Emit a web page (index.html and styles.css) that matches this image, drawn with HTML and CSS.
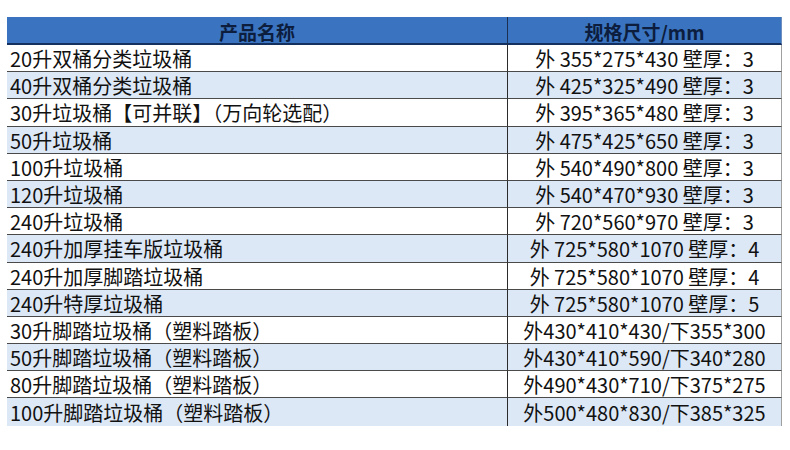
FILE: index.html
```html
<!DOCTYPE html>
<html lang="zh">
<head>
<meta charset="utf-8">
<link rel="stylesheet" href="styles.css">
</head>
<body>
<div class="sheet">
  <div class="cell head name">产品名称</div>
  <div class="cell head size">规格尺寸/mm</div>

  <div class="cell name">20升双桶分类垃圾桶</div><div class="cell size">外 355*275*430 壁厚：3</div>
  <div class="cell name alt">40升双桶分类垃圾桶</div><div class="cell size alt">外 425*325*490 壁厚：3</div>
  <div class="cell name">30升垃圾桶【可并联】（万向轮选配）</div><div class="cell size">外 395*365*480 壁厚：3</div>
  <div class="cell name alt">50升垃圾桶</div><div class="cell size alt">外 475*425*650 壁厚：3</div>
  <div class="cell name">100升垃圾桶</div><div class="cell size">外 540*490*800 壁厚：3</div>
  <div class="cell name alt">120升垃圾桶</div><div class="cell size alt">外 540*470*930 壁厚：3</div>
  <div class="cell name">240升垃圾桶</div><div class="cell size">外 720*560*970 壁厚：3</div>
  <div class="cell name alt">240升加厚挂车版垃圾桶</div><div class="cell size alt">外 725*580*1070 壁厚：4</div>
  <div class="cell name">240升加厚脚踏垃圾桶</div><div class="cell size">外 725*580*1070 壁厚：4</div>
  <div class="cell name alt">240升特厚垃圾桶</div><div class="cell size alt">外 725*580*1070 壁厚：5</div>
  <div class="cell name">30升脚踏垃圾桶（塑料踏板）</div><div class="cell size">外430*410*430/下355*300</div>
  <div class="cell name alt">50升脚踏垃圾桶（塑料踏板）</div><div class="cell size alt">外430*410*590/下340*280</div>
  <div class="cell name">80升脚踏垃圾桶（塑料踏板）</div><div class="cell size">外490*430*710/下375*275</div>
  <div class="cell name alt last">100升脚踏垃圾桶（塑料踏板）</div><div class="cell size alt last">外500*480*830/下385*325</div>
</div>
</body>
</html>
```

FILE: styles.css
```css
html, body {
  margin: 0;
  padding: 0;
  background: #ffffff;
}

.sheet {
  margin: 17px 0 0 7px;
  width: 775px;
  display: grid;
  grid-template-columns: 501px 274px;
  grid-template-rows: 28px;
  grid-auto-rows: 27.2px;
  font-family: "Noto Sans CJK SC", "Noto Sans", sans-serif;
  font-size: 20px;
  color: #111111;
}

.cell {
  box-sizing: border-box;
  display: flex;
  align-items: center;
  white-space: nowrap;
  line-height: 1;
  border-bottom: 1px solid #4a4a4a;
  padding-top: 2px;
}

.cell.name {
  padding-left: 3px;
  border-right: 1px solid #2b2b2b;
}

.cell.size {
  justify-content: center;
  border-right: 1px solid #a0a0a0;
}

.cell.alt {
  background: #dde8f6;
}

.cell.last {
  border-bottom: none;
}

.cell.head {
  background: #3a73bf;
  color: #0c1d3d;
  font-weight: 700;
  font-size: 19px;
  justify-content: center;
  border-bottom: 2px solid #14305e;
  padding-left: 0;
}

.cell.head.name {
  border-right: 1px solid #1d2f50;
}

.cell.head.size {
  border-right: 1px solid #6f8fbf;
}
```
